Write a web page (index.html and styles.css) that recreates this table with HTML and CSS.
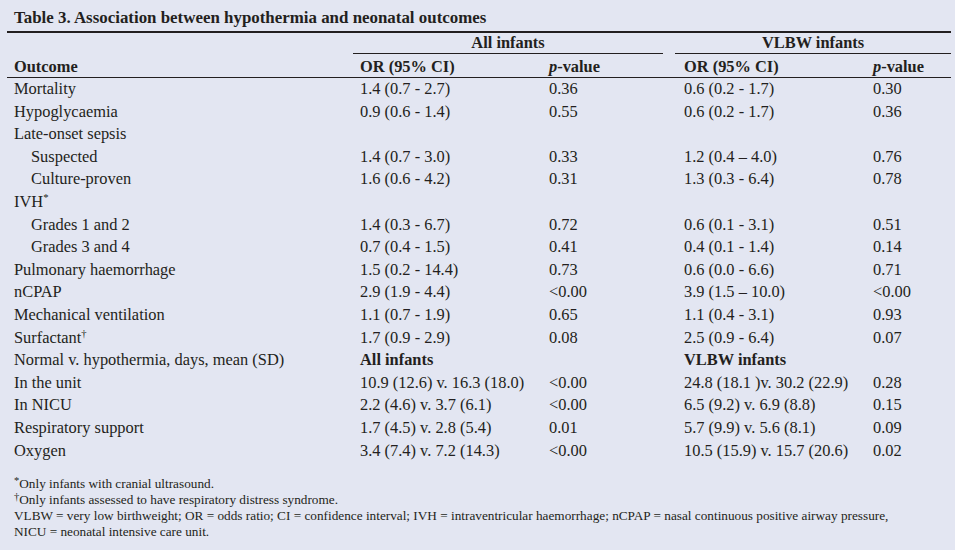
FILE: index.html
```html
<!DOCTYPE html>
<html lang="en">
<head>
<meta charset="utf-8">
<title>Table 3</title>
<link rel="stylesheet" href="styles.css">
</head>
<body>
<div class="page">
  <div class="title">Table 3. Association between hypothermia and neonatal outcomes</div>
  <table class="tbl">
    <colgroup>
      <col class="c1"><col class="c2"><col class="c3"><col class="c4"><col class="c5">
    </colgroup>
    <thead>
      <tr class="span-row">
        <th></th>
        <th colspan="2"><div class="span span-left">All infants</div></th>
        <th colspan="2"><div class="span span-right">VLBW infants</div></th>
      </tr>
      <tr class="head-row">
        <th>Outcome</th>
        <th>OR (95% CI)</th>
        <th><i>p</i>-value</th>
        <th>OR (95% CI)</th>
        <th><i>p</i>-value</th>
      </tr>
    </thead>
    <tbody>
      <tr><td>Mortality</td><td>1.4 (0.7 - 2.7)</td><td>0.36</td><td>0.6 (0.2 - 1.7)</td><td>0.30</td></tr>
      <tr><td>Hypoglycaemia</td><td>0.9 (0.6 - 1.4)</td><td>0.55</td><td>0.6 (0.2 - 1.7)</td><td>0.36</td></tr>
      <tr><td>Late-onset sepsis</td><td></td><td></td><td></td><td></td></tr>
      <tr><td class="ind">Suspected</td><td>1.4 (0.7 - 3.0)</td><td>0.33</td><td>1.2 (0.4 – 4.0)</td><td>0.76</td></tr>
      <tr><td class="ind">Culture-proven</td><td>1.6 (0.6 - 4.2)</td><td>0.31</td><td>1.3 (0.3 - 6.4)</td><td>0.78</td></tr>
      <tr><td>IVH<sup>*</sup></td><td></td><td></td><td></td><td></td></tr>
      <tr><td class="ind">Grades 1 and 2</td><td>1.4 (0.3 - 6.7)</td><td>0.72</td><td>0.6 (0.1 - 3.1)</td><td>0.51</td></tr>
      <tr><td class="ind">Grades 3 and 4</td><td>0.7 (0.4 - 1.5)</td><td>0.41</td><td>0.4 (0.1 - 1.4)</td><td>0.14</td></tr>
      <tr><td>Pulmonary haemorrhage</td><td>1.5 (0.2 - 14.4)</td><td>0.73</td><td>0.6 (0.0 - 6.6)</td><td>0.71</td></tr>
      <tr><td>nCPAP</td><td>2.9 (1.9 - 4.4)</td><td>&lt;0.00</td><td>3.9 (1.5 – 10.0)</td><td>&lt;0.00</td></tr>
      <tr><td>Mechanical ventilation</td><td>1.1 (0.7 - 1.9)</td><td>0.65</td><td>1.1 (0.4 - 3.1)</td><td>0.93</td></tr>
      <tr><td>Surfactant<sup>†</sup></td><td>1.7 (0.9 - 2.9)</td><td>0.08</td><td>2.5 (0.9 - 6.4)</td><td>0.07</td></tr>
      <tr><td>Normal v. hypothermia, days, mean (SD)</td><td class="b">All infants</td><td></td><td class="b">VLBW infants</td><td></td></tr>
      <tr><td>In the unit</td><td>10.9 (12.6) v. 16.3 (18.0)</td><td>&lt;0.00</td><td>24.8 (18.1 )v. 30.2 (22.9)</td><td>0.28</td></tr>
      <tr><td>In NICU</td><td>2.2 (4.6) v. 3.7 (6.1)</td><td>&lt;0.00</td><td>6.5 (9.2) v. 6.9 (8.8)</td><td>0.15</td></tr>
      <tr><td>Respiratory support</td><td>1.7 (4.5) v. 2.8 (5.4)</td><td>0.01</td><td>5.7 (9.9) v. 5.6 (8.1)</td><td>0.09</td></tr>
      <tr><td>Oxygen</td><td>3.4 (7.4) v. 7.2 (14.3)</td><td>&lt;0.00</td><td>10.5 (15.9) v. 15.7 (20.6)</td><td>0.02</td></tr>
    </tbody>
  </table>
  <div class="notes">
    <p><sup>*</sup>Only infants with cranial ultrasound.</p>
    <p><sup>†</sup>Only infants assessed to have respiratory distress syndrome.</p>
    <p>VLBW = very low birthweight; OR = odds ratio; CI = confidence interval; IVH = intraventricular haemorrhage; nCPAP = nasal continuous positive airway pressure,</p>
    <p>NICU = neonatal intensive care unit.</p>
  </div>
</div>
</body>
</html>
```

FILE: styles.css
```css
html, body {
  margin: 0;
  padding: 0;
  background: #e3e6f2;
}
body {
  width: 955px;
  height: 550px;
  overflow: hidden;
  font-family: "Liberation Serif", "Times New Roman", serif;
  color: #231f20;
}
.page {
  padding: 0 4px 0 7px;
}
.title {
  font-weight: bold;
  font-size: 16.9px;
  line-height: 22px;
  padding: 7px 0 2px 7px;
  border-bottom: 2px solid #231f20;
}
.tbl {
  width: 944px;
  border-collapse: collapse;
  table-layout: fixed;
  font-size: 16.4px;
}
.c1 { width: 346px; }
.c2 { width: 189px; }
.c3 { width: 135px; }
.c4 { width: 189px; }
.c5 { width: 85px; }
.tbl th, .tbl td {
  padding: 0 0 0 7px;
  text-align: left;
  white-space: nowrap;
  vertical-align: middle;
}
.tbl th { font-weight: bold; }
.span-row th {
  padding: 0;
  height: 21px;
}
.span {
  text-align: center;
  line-height: 20px;
  border-bottom: 1px solid #231f20;
}
.span-left { margin-right: 14px; }
.span-right { margin-left: -2px; }
.head-row th {
  padding-top: 3px;
  line-height: 20px;
  border-bottom: 1px solid #231f20;
}
.tbl td {
  height: 22.6px;
  line-height: 22.6px;
}
.tbl td.ind { padding-left: 24px; }
.tbl td.b { font-weight: bold; }
sup {
  font-size: 0.65em;
  vertical-align: 0.6em;
  line-height: 0;
}
.notes {
  margin-top: 14px;
  padding-left: 7px;
  font-size: 13.25px;
  line-height: 16px;
}
.notes sup {
  font-size: 0.8em;
  vertical-align: 0.35em;
}
.notes p { margin: 0; }
```
